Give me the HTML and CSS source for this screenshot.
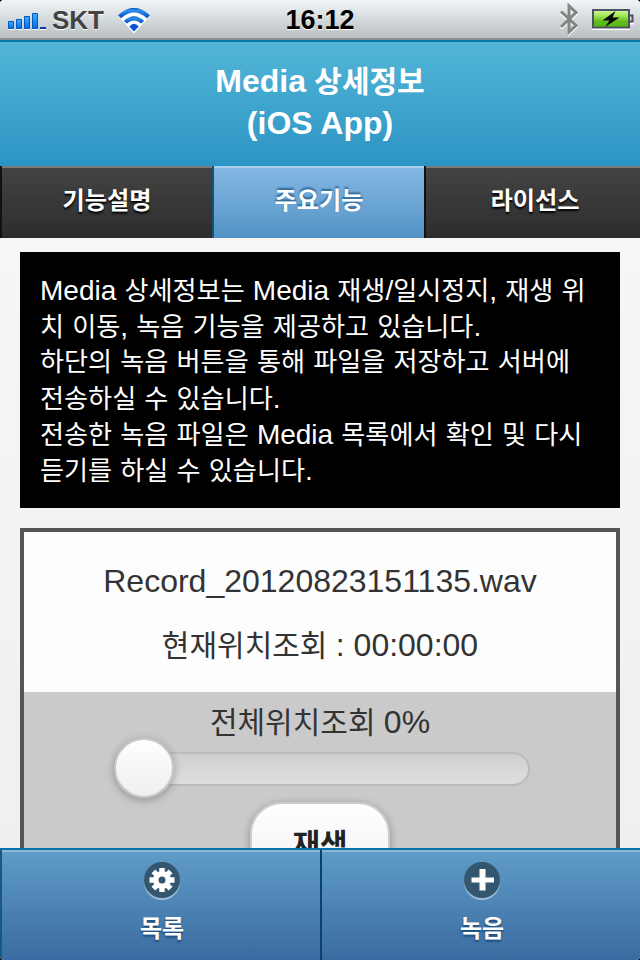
FILE: index.html
```html
<!DOCTYPE html>
<html lang="ko">
<head>
<meta charset="utf-8">
<title>Media 상세정보</title>
<link rel="stylesheet" href="styles.css">
</head>
<body>
<div class="phone">
  <div class="status">
    <div class="carrier">
      <svg class="signal" width="40" height="20" viewBox="0 0 40 20">
        <defs>
          <linearGradient id="blue" x1="0" y1="0" x2="0" y2="1"><stop offset="0" stop-color="#35b4f8"/><stop offset="1" stop-color="#0869e8"/></linearGradient>
        </defs>
        <path d="M0 17h6v1H0zM8 17h6v1H8zM16 17h6v1h-6zM24 17h6v1h-6zM32 17h6v1h-6z" fill="#fff"/>
        <g fill="url(#blue)" stroke="#0754c4">
          <path d="M.5 9.500h5v7h-5z"/><path d="M8.500 7.500h5v9h-5z"/><path d="M16.500 4.500h5v12h-5z"/><path d="M24.500 1.500h5v15h-5z"/>
        </g>
        <path d="M32 15h6v2h-6z" fill="#063bb8"/>
      </svg>
      <span class="operator">SKT</span>
      <svg class="wifi" width="34" height="26" viewBox="0 0 34 26">
        <defs>
          <linearGradient id="wave" x1="0" y1="0" x2="0" y2="1"><stop offset="0" stop-color="#0a50bd"/><stop offset=".25" stop-color="#2b91ee"/><stop offset="1" stop-color="#0848c8"/></linearGradient>
        </defs>
        <path d="M1 7.700Q17-7.500 33 7.700L17 25.500z" fill="#fff"/>
        <path d="M1 7.200Q17-7.500 33 7.200L30 10.200Q17-1 4 10.200z" fill="url(#wave)"/>
        <path d="M6.800 12.800Q17 3.500 27.200 12.800L24.200 15.600Q17 9.500 9.800 15.600z" fill="url(#wave)"/>
        <path d="M17 23.500l-4.700-5Q17 13 21.700 18.500z" fill="#0b50cf"/>
      </svg>
    </div>
    <div class="clock">16:12</div>
    <div class="power">
      <svg width="20" height="34" viewBox="0 0 20 34">
        <path d="M2 9.500L17 23.500 10 30V4l7 6.500L2 25" transform="translate(0 1.500)" fill="none" stroke="#fff" stroke-width="3"/>
        <path d="M2 9.500L17 23.500 10 30V4l7 6.500L2 25" fill="none" stroke="#858585" stroke-width="3"/>
      </svg>
      <svg width="43" height="24" viewBox="0 0 43 24">
        <defs><linearGradient id="charge" x1="0" y1="0" x2="0" y2="1"><stop offset="0" stop-color="#d2f4a0"/><stop offset=".3" stop-color="#a7e95b"/><stop offset=".65" stop-color="#62bd1c"/><stop offset="1" stop-color="#52ba08"/></linearGradient></defs>
        <path d="M0 20h38v2H0zM38 15h4v1.500h-4z" fill="#fff"/>
        <rect x="1" y="2" width="36" height="17.500" fill="url(#charge)" stroke="#4b5263" stroke-width="2"/>
        <path d="M38 7.500h2.500v6H38" fill="#ddd" stroke="#4b5263" stroke-width="2"/>
        <path d="M23.500 3L10.500 12.500h7L13 19 27.500 9.500h-7z" fill="#050505"/>
      </svg>
    </div>
  </div>

  <header class="title">
    <div><span class="latin">Media</span> 상세정보</div>
    <div><span class="latin">(iOS App)</span></div>
  </header>

  <nav class="tabs">
    <a class="tab">기능설명</a>
    <a class="tab active">주요기능</a>
    <a class="tab">라이선스</a>
  </nav>

  <main class="content">
    <section class="notice">
      <div><span class="latin">Media</span> 상세정보는 <span class="latin">Media</span> 재생<span class="latin">/</span>일시정지<span class="latin">,</span> 재생 위</div>
      <div>치 이동<span class="latin">,</span> 녹음 기능을 제공하고 있습니다<span class="latin">.</span></div>
      <div>하단의 녹음 버튼을 통해 파일을 저장하고 서버에</div>
      <div>전송하실 수 있습니다<span class="latin">.</span></div>
      <div>전송한 녹음 파일은 <span class="latin">Media</span> 목록에서 확인 및 다시</div>
      <div>듣기를 하실 수 있습니다<span class="latin">.</span></div>
    </section>
    <section class="player">
      <div class="info">
        <div><span class="latin">Record_20120823151135.wav</span></div>
        <div>현재위치조회 <span class="latin">: 00:00:00</span></div>
      </div>
      <div class="controls">
        <div class="position">전체위치조회 <span class="latin">0%</span></div>
        <div class="track"><div class="thumb"></div></div>
        <div class="play">재생</div>
      </div>
    </section>
  </main>

  <footer class="toolbar">
    <a class="tool">
      <svg width="36" height="39" viewBox="0 0 36 39">
        <circle cx="18" cy="20" r="18" fill="#fff" fill-opacity=".45"/>
        <circle cx="18" cy="18" r="18" fill="#34566f"/>
        <g stroke="#fff" stroke-width="5.400"><path d="M18 6v24M5.500 18h25M9.400 9.400l17.200 17.200M26.600 9.400L9.400 26.600"/></g>
        <circle cx="18" cy="18" r="9" fill="#fff"/>
        <circle cx="18" cy="18" r="3.500" fill="#34566f"/>
      </svg>
      <span>목록</span>
    </a>
    <a class="tool second">
      <svg width="36" height="39" viewBox="0 0 36 39">
        <circle cx="18" cy="20" r="18" fill="#fff" fill-opacity=".45"/>
        <circle cx="18" cy="18" r="18" fill="#34566f"/>
        <path d="M15.500 7h6v8.500H30v5h-8.500V28.500h-6v-8H7.500v-5h8z" fill="#fff"/>
      </svg>
      <span>녹음</span>
    </a>
  </footer>
</div>
</body>
</html>
```
FILE: styles.css
```css
* { box-sizing: border-box; }
body {
  margin: 0;
  background: #000;
  font-family: "Liberation Sans", "Noto Sans CJK KR", sans-serif;
}
.phone {
  width: 640px;
  height: 960px;
  display: flex;
  flex-direction: column;
  overflow: hidden;
  border-radius: 4px;
  background: linear-gradient(#f9f9f9, #eee);
}
.status {
  flex: none;
  height: 40px;
  display: grid;
  grid-template-columns: 1fr auto 1fr;
  background: linear-gradient(#f0f5f8, #b9bfc2);
  border-bottom: 2px solid #8b8d8f;
  font-weight: bold;
  font-size: 26px;
  line-height: 40px;
  text-shadow: 0 1px 0 #fff;
}
.carrier { display: flex; align-items: flex-start; padding-left: 8px; }
.signal { margin-top: 12px; }
.operator { margin-left: 4px; color: #434343; }
.wifi { margin: 8px 0 0 13px; }
.clock { color: #000; font-size: 27px; }
.power { display: flex; justify-content: flex-end; padding-right: 5px; gap: 13px; }
.power svg:first-child { margin-top: 2px; }
.power svg:last-child { margin-top: 8px; }

.title {
  flex: none;
  height: 126px;
  padding-top: 18px;
  border-top: 2px solid #0878aa;
  background: linear-gradient(#53b6d7, #2c94c4);
  color: #fff;
  font-size: 30px;
  font-weight: bold;
  text-align: center;
}
.title div { height: 42px; line-height: 42px; white-space: nowrap; }
.title .latin { font-size: 32px; }

.tabs {
  flex: none;
  display: grid;
  grid-template-columns: 212px 212px 216px;
  height: 72px;
}
.tab {
  border-left: 2px solid #111;
  background: linear-gradient(#444, #2d2d2d);
  box-shadow: inset 0 2px #7a7a7a;
  color: #fff;
  font-size: 24.200px;
  font-weight: bold;
  line-height: 70px;
  text-align: center;
  text-shadow: 0 2px 2px #000;
}
.tab.active {
  border-color: #155275;
  background: linear-gradient(#85b8e4, #5393c5);
  box-shadow: inset 0 2px #a9cfe9;
  text-shadow: 0 -2px 2px #2b6390;
}
.tab:last-child { padding-left: 4px; }

.content { flex: 1; min-height: 0; overflow: hidden; padding: 14px 20px 0; }
.notice {
  height: 256px;
  padding: 20px;
  background: #000;
  color: #fff;
  font-size: 26.150px;
  word-spacing: .9px;
  white-space: nowrap;
}
.notice div { height: 36px; line-height: 37px; }
.notice .latin { font-size: 28px; }

.player {
  margin-top: 20px;
  border: 4px solid #555;
  color: #333;
  font-size: 30px;
  text-align: center;
}
.player .latin { font-size: 32px; }
.info { height: 160px; padding-top: 17px; background: #fdfdfd; }
.info div { height: 64px; line-height: 64px; }
.controls {
  height: 260px;
  display: flex;
  flex-direction: column;
  align-items: center;
  background: #cacaca;
}
.position { height: 60px; line-height: 61px; flex: none; }
.track {
  flex: none;
  width: 416px;
  height: 34px;
  margin-left: 4px;
  border: 2px solid #bbb;
  border-radius: 17px;
  background: linear-gradient(#cfcfcf, #dedede);
}
.thumb {
  width: 60px;
  height: 60px;
  margin: -16px 0 0 -2px;
  border: 2px solid #c6c6c6;
  border-radius: 50%;
  background: linear-gradient(#fff, #eee);
  box-shadow: 0 2px 8px rgba(0, 0, 0, .3);
}
.play {
  flex: none;
  width: 140px;
  height: 80px;
  margin-top: 16px;
  border: 2px solid #ccc;
  border-radius: 32px;
  background: linear-gradient(#fff, #f0f0f0);
  box-shadow: 0 2px 8px rgba(0, 0, 0, .3);
  color: #222;
  font-weight: bold;
  line-height: 82px;
}

.toolbar {
  flex: none;
  display: grid;
  grid-template-columns: 1fr 1fr;
  height: 112px;
  border-top: 2px solid #0073aa;
}
.tool {
  display: flex;
  flex-direction: column;
  align-items: center;
  padding: 12px 0 0 2px;
  border-left: 2px solid #155a85;
  background: linear-gradient(#609dc8, #3a6ba0);
  box-shadow: inset 0 2px #8db7d5;
  color: #fff;
  font-size: 24px;
  font-weight: bold;
  line-height: 34px;
  text-shadow: 0 2px 2px #194b7e;
}
.tool.second { border-color: #06446b; }
.tool svg { display: block; }
.tool span { margin-top: 11px; }
```
